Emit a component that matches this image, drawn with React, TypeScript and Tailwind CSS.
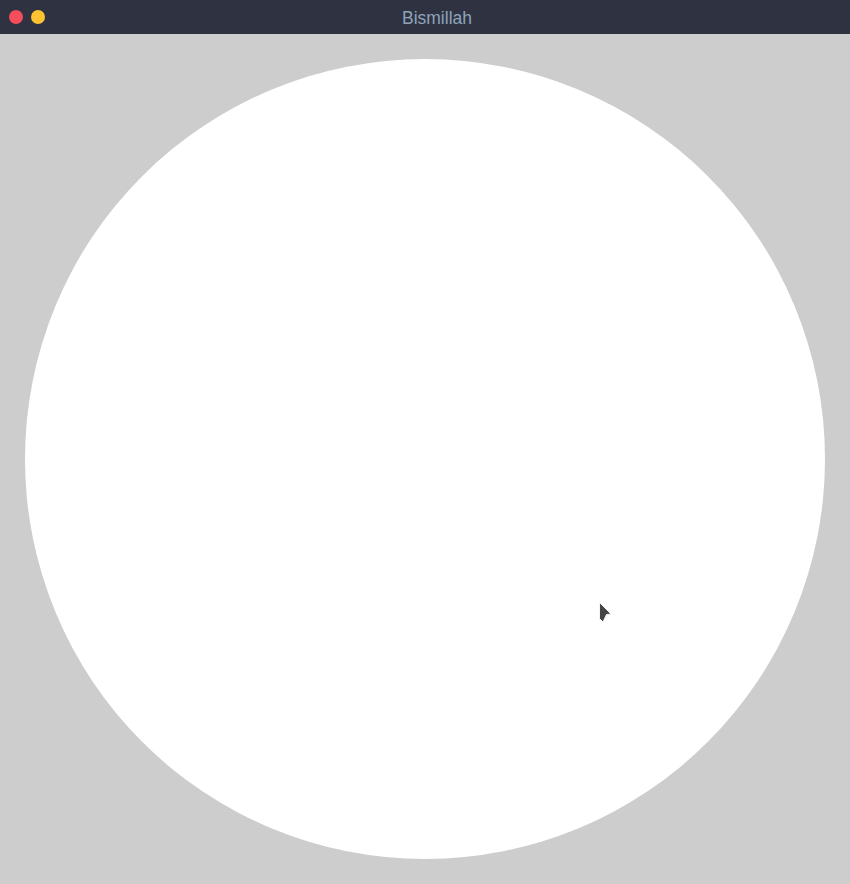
import React from "react";

export default function App() {
  return (
    <div className="w-[850px] h-[884px] flex flex-col bg-[#cdcdcd] overflow-hidden" style={{ fontFamily: '"Liberation Sans", Arial, sans-serif' }}>
      <div className="h-[34px] bg-[#2f3341] flex items-center relative shrink-0">
        <div className="flex items-center gap-[8px] pl-[9px]">
          <div className="w-[14px] h-[14px] rounded-full bg-[#f44d5b]" />
          <div className="w-[14px] h-[14px] rounded-full bg-[#fdc332]" />
        </div>
        <div className="absolute inset-0 flex items-center justify-center pl-[24px] pt-[2px] text-[17.5px] text-[#8ea3ba]">
          Bismillah
        </div>
      </div>
      <div className="flex-1 p-[25px] relative">
        <div className="w-[800px] h-[800px] rounded-full bg-white" />
        <svg className="absolute left-[598px] top-[567px]" width="16" height="24" viewBox="0 0 16 24">
          <path d="M1.5 1.5 L13 13 L8.5 13.5 L5 21 L1.5 17.5 Z" fill="#454545" stroke="#f4f4f4" strokeWidth="1" strokeLinejoin="round" />
        </svg>
      </div>
    </div>
  );
}
